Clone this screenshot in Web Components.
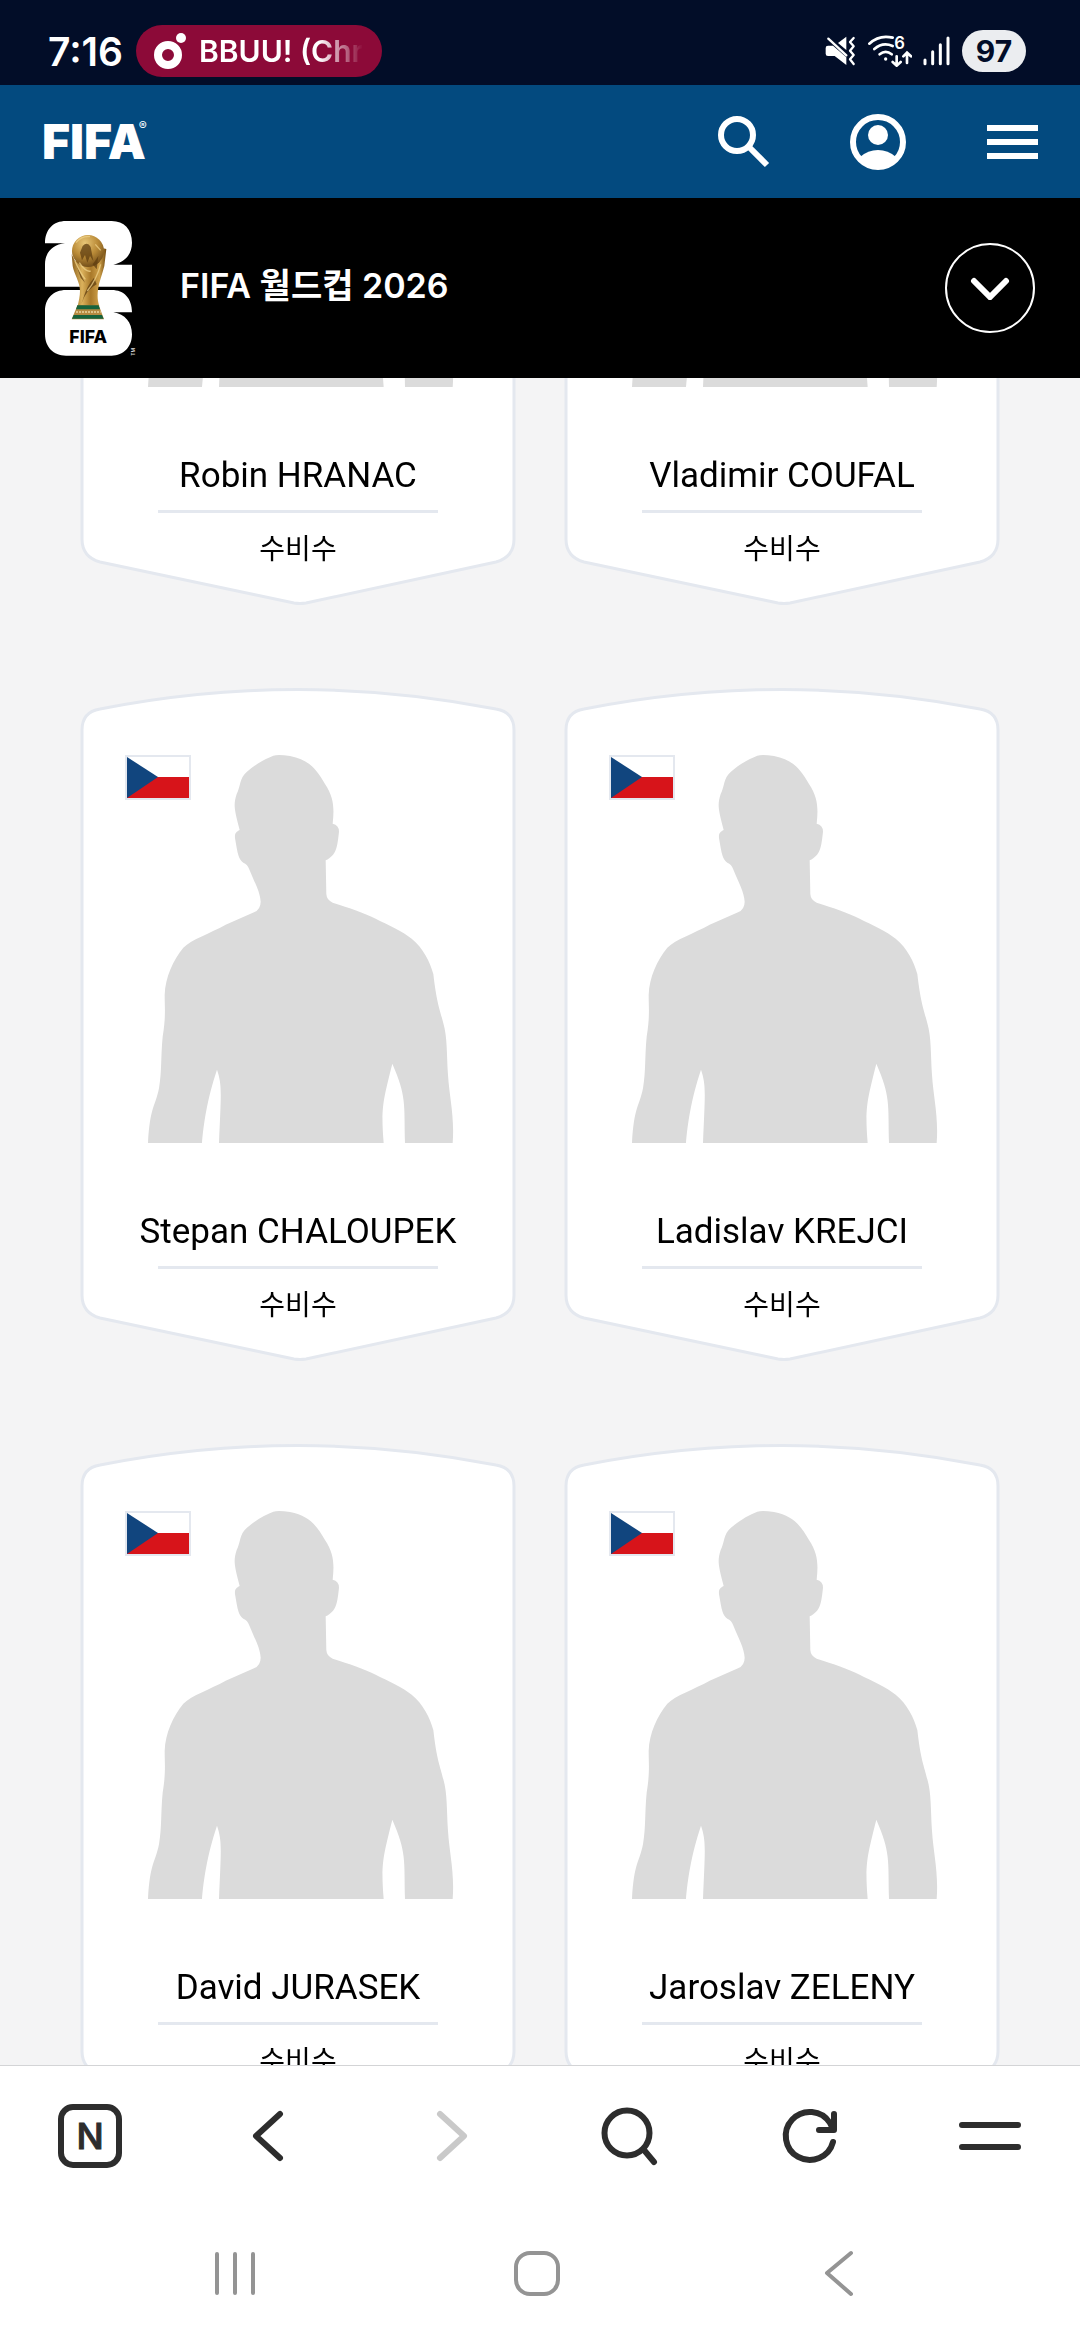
<!DOCTYPE html>
<html lang="ko">
<head>
<meta charset="utf-8">
<meta name="viewport" content="width=device-width, initial-scale=1">
<title>FIFA 월드컵 2026</title>
<style>
    body {
        margin: 0;
        height: 100vh;
        display: flex;
        flex-direction: column;
        background: #f4f4f5;
        font-family: Roboto, "Noto Sans CJK KR", sans-serif;
        color: #000;
    }

    main {
        flex: 1;
        min-height: 0;
        overflow-y: auto;
        scrollbar-width: none;
    }
</style>
</head>
<body>
    <status-bar time="7:16" battery="97">BBUU! (Chris)</status-bar>
    <site-header></site-header>
    <competition-bar>FIFA 월드컵 2026</competition-bar>

    <main>
        <player-grid>
            <player-card position="수비수">Robin HRANAC</player-card>
            <player-card position="수비수">Vladimir COUFAL</player-card>
            <player-card position="수비수">Stepan CHALOUPEK</player-card>
            <player-card position="수비수">Ladislav KREJCI</player-card>
            <player-card position="수비수">David JURASEK</player-card>
            <player-card position="수비수">Jaroslav ZELENY</player-card>
        </player-grid>
    </main>

    <browser-toolbar></browser-toolbar>
    <system-nav></system-nav>

<script>
// Phone status bar, the slot is the now playing title
class StatusBar extends HTMLElement {
    constructor() {
        super();
        this.attachShadow({ mode: 'open' });
        this.shadowRoot.innerHTML = `
            <style>
                :host {
                    display: flex;
                    align-items: center;
                    box-sizing: border-box;
                    height: 85px;
                    padding: 17px 54px 0 48px;
                    background: #020d28;
                    color: #fff;
                    font-family: Inter, "Noto Sans CJK KR", sans-serif;
                    font-weight: 600;
                }

                .time {
                    font-size: 39px;
                }

                .pill {
                    display: flex;
                    align-items: center;
                    gap: 12px;
                    box-sizing: border-box;
                    width: 246px;
                    height: 52px;
                    margin-left: 13px;
                    padding: 0 20px 0 18px;
                    border-radius: 26px;
                    background: #8c0a38;
                    font-size: 30px;
                }

                .pill svg {
                    flex: none;
                }

                .title {
                    overflow: hidden;
                    white-space: nowrap;
                    mask-image: linear-gradient(to right, #000 120px, transparent 164px);
                }

                .icons {
                    display: flex;
                    align-items: center;
                    gap: 11px;
                    margin-left: auto;
                }

                .battery {
                    width: 64px;
                    border-radius: 21px;
                    background: #ebedf0;
                    color: #020d28;
                    font-size: 30px;
                    line-height: 42px;
                    font-weight: 700;
                    text-align: center;
                }
            </style>

            <span class="time"></span>
            <div class="pill">
                <svg width="33" height="38" viewBox="0 0 33 38">
                    <circle cx="14" cy="23" r="10" fill="none" stroke="#fff" stroke-width="8"/>
                    <circle cx="27" cy="6" r="5" fill="#fff"/>
                </svg>
                <span class="title"><slot></slot></span>
            </div>
            <div class="icons">
                <svg width="32" height="32" viewBox="496 105 96 96" fill="#fff">
                    <path d="M505 137H520L560 172V195L525 168H505Q498 168 498 161V144Q498 137 505 137ZM535 129L560 110V150Z"/>
                    <path d="M506 116L560 166" stroke="#fff" stroke-width="7" stroke-linecap="round"/>
                    <path d="M582 114L571 126L582 139L571 152L582 165L571 178L582 192" fill="none" stroke="#fff" stroke-width="7" stroke-linecap="round" stroke-linejoin="round"/>
                </svg>
                <svg width="44" height="32" viewBox="630 105 132 96" fill="none" stroke="#fff" stroke-width="8" stroke-linecap="round">
                    <path d="M634 131Q664 103 704 113M649 147Q674 125 704 138M665 163Q683 148 701 163"/>
                    <path d="M716 169V196M704 186L716 197L728 186M747 189V160M736 169L747 158L759 169"/>
                    <circle cx="683" cy="177" r="5" fill="#fff" stroke="none"/>
                    <text x="709" y="146" font-size="50" font-weight="600" fill="#fff" stroke="none">6</text>
                </svg>
                <svg width="28" height="32" viewBox="791 105 84 96" stroke="#fff" stroke-width="9" stroke-linecap="round">
                    <path d="M797 180V191M820 155V191"/>
                    <path d="M843 134V191M866 114V191"/>
                </svg>
                <span class="battery"></span>
            </div>
        `;
    }

    connectedCallback() {
        this.shadowRoot.querySelector('.time').textContent = this.getAttribute('time');
        this.shadowRoot.querySelector('.battery').textContent = this.getAttribute('battery');
    }
}

// Blue bar with the FIFA logo and the main actions
class SiteHeader extends HTMLElement {
    constructor() {
        super();
        this.attachShadow({ mode: 'open' });
        this.shadowRoot.innerHTML = `
            <style>
                :host {
                    display: flex;
                    align-items: center;
                    justify-content: space-between;
                    height: 113px;
                    padding: 0 42px;
                    background: #034a7f;
                }

                .logo {
                    display: flex;
                    color: #fff;
                    font: 900 48px/48px Inter, sans-serif;
                    text-decoration: none;
                }

                sup {
                    font: 400 12px/16px Inter, sans-serif;
                    margin-left: -7px;
                }

                nav {
                    display: flex;
                    align-items: center;
                    gap: 80px;
                }

                button {
                    display: flex;
                    padding: 0;
                    border: 0;
                    background: none;
                }
            </style>

            <a class="logo" href="#">FIFA<sup>®</sup></a>
            <nav>
                <button aria-label="검색">
                    <svg width="52" height="52" viewBox="0 0 52 52" fill="none" stroke="#fff" stroke-width="6">
                        <circle cx="19" cy="19" r="16"/>
                        <path d="M30 30L49 49"/>
                    </svg>
                </button>
                <button aria-label="계정">
                    <svg width="56" height="56" viewBox="0 0 56 56">
                        <circle cx="28" cy="28" r="25" fill="none" stroke="#fff" stroke-width="6"/>
                        <circle cx="28" cy="21" r="10" fill="#fff"/>
                        <path d="M10 43Q18 36 28 36T46 43L40 51Q28 56 16 51Z" fill="#fff"/>
                    </svg>
                </button>
                <button aria-label="메뉴">
                    <svg width="52" height="52" viewBox="0 0 52 52" stroke="#fff" stroke-width="6">
                        <path d="M1 12H52M1 26H52M1 40H52"/>
                    </svg>
                </button>
            </nav>
        `;
    }
}

// Tournament emblem: stacked 26 with the trophy in front
class WorldCupEmblem extends HTMLElement {
    constructor() {
        super();
        this.attachShadow({ mode: 'open' });
        this.shadowRoot.innerHTML = `
            <style>
                :host {
                    display: block;
                }

                svg {
                    display: block;
                }

                text {
                    font-family: Inter, sans-serif;
                }
            </style>

            <svg width="91" height="135" viewBox="45 30 273 405">
                <defs>
                    <linearGradient id="gold">
                        <stop offset="0" stop-color="#8a5f1c"/>
                        <stop offset=".3" stop-color="#dcb25c"/>
                        <stop offset=".55" stop-color="#a87829"/>
                        <stop offset=".8" stop-color="#cfa14a"/>
                        <stop offset="1" stop-color="#6f480f"/>
                    </linearGradient>
                    <radialGradient id="globe" cx=".4" cy=".25" r=".75">
                        <stop offset="0" stop-color="#e8c676"/>
                        <stop offset=".55" stop-color="#b98a37"/>
                        <stop offset="1" stop-color="#75501a"/>
                    </radialGradient>
                </defs>
                <path fill="#fff" d="M45 97C45 55 70 30 108 30H245C282 30 306 55 306 95C306 130 285 153 250 161H306V227H45V160C45 125 68 100 105 97Z"/>
                <path fill="#fff" d="M45 300C45 262 70 237 108 237H245C282 237 306 262 306 304H250C285 309 306 335 306 370C306 408 280 434 245 434H108C70 434 45 408 45 370Z"/>
                <path fill="url(#gold)" d="M125 130L128 165C132 190 150 212 150 240C150 255 146 272 143 285H208C202 268 202 252 204 236C207 212 217 190 223 165L229 114L220 112L210 150H135Z"/>
                <circle cx="174" cy="120" r="48" fill="url(#globe)"/>
                <path fill="#5f3d10" opacity=".75" d="M158 105Q172 90 182 108L190 150L180 135L172 155L165 132L156 148L150 125ZM195 150L205 135L200 175L188 160ZM192 200Q170 225 160 262L154 278Q170 235 200 220ZM140 165L165 215L152 200Z"/>
                <path fill="none" stroke="#efd18a" stroke-width="4" opacity=".75" d="M138 95Q155 74 180 77M135 150Q150 185 166 205M212 160Q200 205 172 240M148 155Q168 185 182 180M196 100L212 118"/>
                <path fill="#b58a41" d="M143 282H206L222 325H125Z"/>
                <path fill="#17633c" d="M142 283H206L210 295H138ZM131 312H216L221 323H126Z"/>
                <path fill="none" stroke="#ead5a0" stroke-width="5" stroke-dasharray="6 3" d="M138 303H212"/>
                <text x="118" y="396" font-size="53" font-weight="800">FIFA</text>
                <text transform="translate(314 434) rotate(-90)" font-size="15" font-weight="500" fill="#ddd">TM</text>
            </svg>
        `;
    }
}

class CompetitionBar extends HTMLElement {
    constructor() {
        super();
        this.attachShadow({ mode: 'open' });
        this.shadowRoot.innerHTML = `
            <style>
                :host {
                    display: flex;
                    align-items: center;
                    height: 180px;
                    padding: 0 45px;
                    background: #000;
                    color: #fff;
                }

                h1 {
                    flex: 1;
                    margin: 0 0 0 44px;
                    padding-bottom: 4px;
                    font: 600 34px/48px Inter, "Noto Sans CJK KR", sans-serif;
                }

                button {
                    display: grid;
                    place-items: center;
                    width: 90px;
                    height: 90px;
                    padding: 0;
                    border: 2px solid #fff;
                    border-radius: 50%;
                    background: none;
                }
            </style>

            <world-cup-emblem></world-cup-emblem>
            <h1><slot></slot></h1>
            <button aria-label="펼치기">
                <svg width="40" height="24" viewBox="0 0 40 24">
                    <path d="M4 5L20 21L36 5" fill="none" stroke="#fff" stroke-width="6" stroke-linecap="round"/>
                </svg>
            </button>
        `;
    }
}

class PlayerGrid extends HTMLElement {
    constructor() {
        super();
        this.attachShadow({ mode: 'open' });
        this.shadowRoot.innerHTML = `
            <style>
                :host {
                    display: grid;
                    grid-template-columns: 1fr 1fr;
                    gap: 83px 48px;
                    padding: 80px;
                }
            </style>
            <slot></slot>
        `;
    }
}

// Player card, the slot is the player's name
class PlayerCard extends HTMLElement {
    constructor() {
        super();
        this.attachShadow({ mode: 'open' });
        this.shadowRoot.innerHTML = `
            <style>
                :host {
                    display: flex;
                    flex-direction: column;
                    align-items: center;
                    position: relative;
                    padding: 67px 0 35px;
                    text-align: center;
                }

                .shape {
                    position: absolute;
                    inset: 0;
                    width: 100%;
                    height: 100%;
                    z-index: -1;
                }

                .flag {
                    position: absolute;
                    top: 67px;
                    left: 45px;
                    border: 2px solid #e4e8ef;
                }

                .photo {
                    display: block;
                }

                h2 {
                    margin: 65px 0 10px;
                    font-size: 35px;
                    line-height: 48px;
                    font-weight: 400;
                }

                hr {
                    width: 64%;
                    height: 3px;
                    margin: 0 0 17px;
                    border: 0;
                    background: #e4e8ef;
                }

                p {
                    margin: 0;
                    font-size: 28px;
                    line-height: 40px;
                }
            </style>

            <svg class="shape" viewBox="0 0 436 673" preserveAspectRatio="none">
                <path fill="#fff" stroke="#e4e8ef" stroke-width="3" d="M2 42Q2 24 20 21Q218 -18 416 21Q434 24 434 42V607Q434 625 416 630L226 671Q220 672 214 671L20 630Q2 625 2 607Z"/>
            </svg>
            <svg class="photo" width="312" height="388" viewBox="246 255 936 1164">
                <path fill="#dbdbdb" d="M640 257Q655 253 690 258C750 270 770 300 795 342C822 382 823 415 818 461Q837 465 837 485C832 530 830 555 797 571L799 672Q800 690 818 698C870 714 910 728 947 746C985 765 1030 785 1055 806C1090 835 1110 875 1120 912C1130 1000 1140 1020 1150 1060C1162 1100 1160 1150 1164 1215C1168 1280 1184 1340 1178 1419H1035C1032 1300 1040 1280 997 1181C970 1290 962 1310 971 1419H477C484 1260 486 1245 471 1199C440 1290 430 1370 426 1419H264C270 1310 286 1310 297 1255C306 1200 302 1160 308 1100C318 1040 314 1010 314 975C316 920 340 870 370 833C395 808 450 790 497 764L582 727Q602 718 602 695C600 665 585 640 567 596Q562 583 550 578C535 568 533 550 526 510C522 490 528 486 539 480C522 415 520 405 530 372C542 350 538 325 560 306C590 280 615 267 640 257Z"/>
            </svg>
            <svg class="flag" width="62" height="41" viewBox="0 0 62 41" role="img" aria-label="체코">
                <path fill="#fff" d="M0 0H62V21H0Z"/>
                <path fill="#d7141a" d="M0 20H62V41H0Z"/>
                <path fill="#11457e" d="M0 0L31 20L0 41Z"/>
            </svg>
            <h2><slot></slot></h2>
            <hr>
            <p></p>
        `;
    }

    static get observedAttributes() {
        return ['position'];
    }

    attributeChangedCallback(name, oldValue, newValue) {
        this.shadowRoot.querySelector('p').textContent = newValue;
    }
}

class BrowserToolbar extends HTMLElement {
    constructor() {
        super();
        this.attachShadow({ mode: 'open' });
        this.shadowRoot.innerHTML = `
            <style>
                :host {
                    display: grid;
                    grid-template-columns: repeat(6, 1fr);
                    height: 139px;
                    border-top: 1px solid #d3d4d6;
                    background: #fff;
                }

                button {
                    display: grid;
                    place-items: center;
                    padding: 0;
                    border: 0;
                    background: none;
                    color: #2d2d2d;
                }

                button:disabled {
                    color: #c9c9c9;
                }

                .home {
                    box-sizing: border-box;
                    width: 64px;
                    height: 64px;
                    border: 6px solid;
                    border-radius: 15px;
                    font: 500 36px/52px Inter, sans-serif;
                    -webkit-text-stroke: 1px;
                }

                svg {
                    fill: none;
                    stroke: currentColor;
                    stroke-width: 6;
                    stroke-linecap: round;
                    stroke-linejoin: round;
                }
            </style>

            <button aria-label="네이버 홈"><span class="home">N</span></button>
            <button aria-label="뒤로">
                <svg width="64" height="64" viewBox="-32 -32 64 64"><path d="M10 -22L-14 0L10 22"/></svg>
            </button>
            <button aria-label="앞으로" disabled>
                <svg width="64" height="64" viewBox="-32 -32 64 64"><path d="M-10 -22L14 0L-10 22"/></svg>
            </button>
            <button aria-label="검색">
                <svg width="64" height="64" viewBox="-32 -32 64 64">
                    <circle cx="-3" cy="-3" r="22.5"/>
                    <path d="M14 14L24 26"/>
                </svg>
            </button>
            <button aria-label="새로고침">
                <svg width="64" height="64" viewBox="-32 -32 64 64">
                    <path d="M23 6A24 24 0 1 1 20 -13L23 -7M24 -22V-6H9"/>
                </svg>
            </button>
            <button aria-label="더보기">
                <svg width="64" height="64" viewBox="-32 -32 64 64"><path d="M-28 -11H28M-28 11H28"/></svg>
            </button>
        `;
    }
}

class SystemNav extends HTMLElement {
    constructor() {
        super();
        this.attachShadow({ mode: 'open' });
        this.shadowRoot.innerHTML = `
            <style>
                :host {
                    display: grid;
                    grid-template-columns: repeat(3, 1fr);
                    height: 135px;
                    padding: 0 90px 0 84px;
                    background: #fff;
                }

                button {
                    display: grid;
                    place-items: center;
                    padding: 0;
                    border: 0;
                    background: none;
                }

                svg {
                    fill: none;
                    stroke: #949494;
                    stroke-width: 4;
                    stroke-linecap: round;
                    stroke-linejoin: round;
                }
            </style>

            <button aria-label="최근 앱">
                <svg width="48" height="48" viewBox="-24 -24 48 48"><path d="M-18 -19V20M0 -19V20M18 -19V20"/></svg>
            </button>
            <button aria-label="홈">
                <svg width="48" height="48" viewBox="-24 -24 48 48"><rect x="-21" y="-20" width="42" height="41" rx="14"/></svg>
            </button>
            <button aria-label="뒤로">
                <svg width="48" height="48" viewBox="-24 -24 48 48"><path d="M12 -20L-12 0L12 21"/></svg>
            </button>
        `;
    }
}

customElements.define('status-bar', StatusBar);
customElements.define('site-header', SiteHeader);
customElements.define('world-cup-emblem', WorldCupEmblem);
customElements.define('competition-bar', CompetitionBar);
customElements.define('player-grid', PlayerGrid);
customElements.define('player-card', PlayerCard);
customElements.define('browser-toolbar', BrowserToolbar);
customElements.define('system-nav', SystemNav);

// Open the squad list at the defenders
document.querySelector('main').scrollTop = 526;
</script>
</body>
</html>
